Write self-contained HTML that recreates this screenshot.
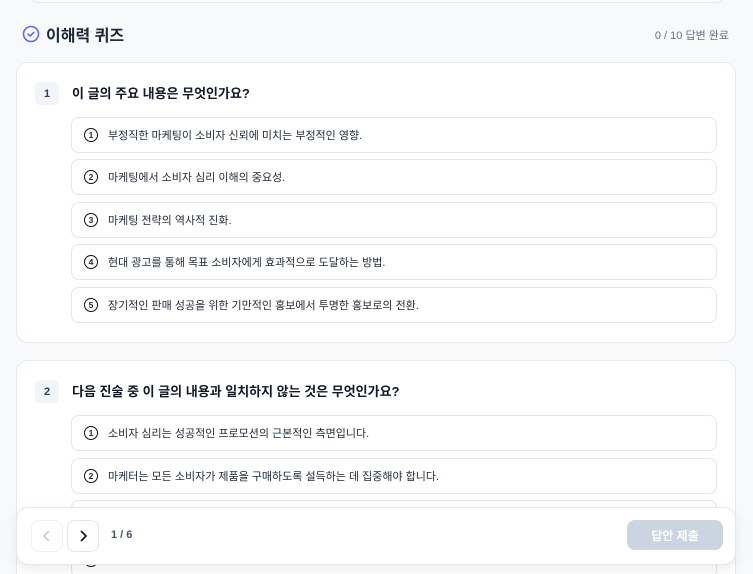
<!DOCTYPE html><html style="height:574px;overflow:hidden"><head><meta charset="utf-8"><style>
body{margin:0;width:753px;height:574px;overflow:hidden;background:#f8f9fb;font-family:"Liberation Sans","Noto Sans CJK KR",sans-serif;color:#1f2937;position:relative}
.top{position:absolute;left:30px;right:30px;top:-10px;height:11px;border:1px solid #e8ebf0;border-radius:8px;background:#f8f9fb}
.hd{position:absolute;left:22px;top:22px;display:flex;align-items:center;font-size:16px;font-weight:bold;color:#1f2937}
.hd svg{margin-right:6px}
.cnt{position:absolute;right:24px;top:27px;font-size:11px;color:#6b7280}
.card{position:absolute;left:16px;width:718px;background:#fff;border:1px solid #e6e9ef;border-radius:12px}
.q{position:absolute;left:55px;font-size:13px;font-weight:bold;color:#111827}
.badge{position:absolute;left:18px;width:24px;height:23px;border-radius:5px;background:#f1f4f8;font-size:11px;font-weight:bold;color:#374151;display:flex;align-items:center;justify-content:center}
.opt{position:absolute;left:54px;width:644px;height:34px;border:1px solid #e2e6ee;border-radius:8px;display:flex;align-items:center;font-size:11px;color:#1f2937;background:#fff}
.num{width:12px;height:12px;border:1.3px solid #111;border-radius:50%;font-size:8.5px;font-weight:bold;display:flex;align-items:center;justify-content:center;margin:0 10px 0 12px}
.bar{position:absolute;left:16px;top:507px;width:718px;height:56px;background:#fff;border:1px solid #e3e7ee;border-radius:12px;box-shadow:0 4px 12px rgba(0,0,0,.08)}
.btn{position:absolute;top:12px;width:30px;height:30px;border:1px solid #e2e6ee;border-radius:8px;background:#fff;display:flex;align-items:center;justify-content:center}
</style></head><body>
<div class="top"></div>
<div class="hd"><svg width="18" height="18" viewBox="0 0 18 18"><circle cx="9" cy="9" r="7.5" fill="none" stroke="#6366f1" stroke-width="1.6"/><path d="M6 9.2l2 1.8 3.8-3.6" fill="none" stroke="#6366f1" stroke-width="1.6" stroke-linecap="round" stroke-linejoin="round"/></svg>이해력 퀴즈</div>
<div class="cnt">0 / 10 답변 완료</div>
<div class="card" style="top:62px;height:279px">
<div class="badge" style="top:19px">1</div><div class="q" style="top:20px">이 글의 주요 내용은 무엇인가요?</div>
<div class="opt" style="top:54px"><span class="num">1</span>부정직한 마케팅이 소비자 신뢰에 미치는 부정적인 영향.</div>
<div class="opt" style="top:96px"><span class="num">2</span>마케팅에서 소비자 심리 이해의 중요성.</div>
<div class="opt" style="top:139px"><span class="num">3</span>마케팅 전략의 역사적 진화.</div>
<div class="opt" style="top:181px"><span class="num">4</span>현대 광고를 통해 목표 소비자에게 효과적으로 도달하는 방법.</div>
<div class="opt" style="top:224px"><span class="num">5</span>장기적인 판매 성공을 위한 기만적인 홍보에서 투명한 홍보로의 전환.</div>
</div>
<div class="card" style="top:360px;height:230px">
<div class="badge" style="top:19px">2</div><div class="q" style="top:20px">다음 진술 중 이 글의 내용과 일치하지 않는 것은 무엇인가요?</div>
<div class="opt" style="top:54px"><span class="num">1</span>소비자 심리는 성공적인 프로모션의 근본적인 측면입니다.</div>
<div class="opt" style="top:97px"><span class="num">2</span>마케터는 모든 소비자가 제품을 구매하도록 설득하는 데 집중해야 합니다.</div>
<div class="opt" style="top:139px"><span class="num">3</span></div>
<div class="opt" style="top:181px"><span class="num">4</span></div>
</div>
<div class="bar">
<div class="btn" style="left:14px;border-color:#eef0f4"><svg width="10" height="12" viewBox="0 0 10 12"><path d="M7 1L2 6l5 5" fill="none" stroke="#c5cad3" stroke-width="1.5"/></svg></div>
<div class="btn" style="left:50px"><svg width="10" height="12" viewBox="0 0 10 12"><path d="M3 1l5 5-5 5" fill="none" stroke="#111827" stroke-width="1.7"/></svg></div>
<div style="position:absolute;left:94px;top:21px;font-size:11px;font-weight:bold;color:#4b5563">1 / 6</div>
<div style="position:absolute;left:610px;top:12px;width:96px;height:30px;border-radius:8px;background:#cbd5e1;color:#fff;font-size:12px;font-weight:bold;display:flex;align-items:center;justify-content:center">답안 제출</div>
</div>
</body></html>
